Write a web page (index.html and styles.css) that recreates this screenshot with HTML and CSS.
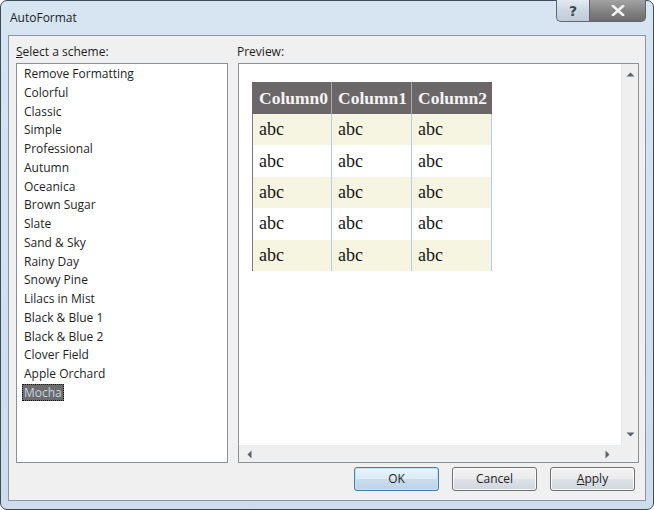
FILE: index.html
```html
<!DOCTYPE html>
<html>
<head>
<meta charset="utf-8">
<link rel="stylesheet" href="styles.css">
</head>
<body>
<div class="window">
  <div class="titlebar">
    <span class="title">AutoFormat</span>
    <div class="caption-btns">
      <div class="cbtn help">?</div>
      <div class="cbtn close">
        <svg width="14" height="11" viewBox="0 0 14 11"><path d="M2 1 L12 10 M12 1 L2 10" stroke="#f2f2f2" stroke-width="2.6" stroke-linecap="square"/></svg>
      </div>
    </div>
  </div>
  <div class="client">
    <div class="grid">
      <div class="lbl"><u>S</u>elect a scheme:</div>
      <div class="lbl">Preview:</div>
      <div class="listbox">
        <div class="item">Remove Formatting</div>
        <div class="item">Colorful</div>
        <div class="item">Classic</div>
        <div class="item">Simple</div>
        <div class="item">Professional</div>
        <div class="item">Autumn</div>
        <div class="item">Oceanica</div>
        <div class="item">Brown Sugar</div>
        <div class="item">Slate</div>
        <div class="item">Sand &amp; Sky</div>
        <div class="item">Rainy Day</div>
        <div class="item">Snowy Pine</div>
        <div class="item">Lilacs in Mist</div>
        <div class="item">Black &amp; Blue 1</div>
        <div class="item">Black &amp; Blue 2</div>
        <div class="item">Clover Field</div>
        <div class="item">Apple Orchard</div>
        <div class="item"><span class="sel">Mocha</span></div>
      </div>
      <div class="preview">
        <div class="pv-content">
          <table class="tbl">
            <tr class="hdr"><th>Column0</th><th>Column1</th><th>Column2</th></tr>
            <tr class="alt"><td>abc</td><td>abc</td><td>abc</td></tr>
            <tr><td>abc</td><td>abc</td><td>abc</td></tr>
            <tr class="alt"><td>abc</td><td>abc</td><td>abc</td></tr>
            <tr><td>abc</td><td>abc</td><td>abc</td></tr>
            <tr class="alt"><td>abc</td><td>abc</td><td>abc</td></tr>
          </table>
        </div>
        <div class="vscroll">
          <svg width="9" height="5" viewBox="0 0 9 5"><path d="M0.5 4.5 L4.5 0.5 L8.5 4.5 Z" fill="#5b6470"/></svg>
          <svg width="9" height="5" viewBox="0 0 9 5"><path d="M0.5 0.5 L4.5 4.5 L8.5 0.5 Z" fill="#5b6470"/></svg>
        </div>
        <div class="hscroll">
          <svg width="5" height="9" viewBox="0 0 5 9"><path d="M4.5 0.5 L0.5 4.5 L4.5 8.5 Z" fill="#5b6470"/></svg>
          <svg width="5" height="9" viewBox="0 0 5 9"><path d="M0.5 0.5 L4.5 4.5 L0.5 8.5 Z" fill="#5b6470"/></svg>
        </div>
        <div class="corner"></div>
      </div>
    </div>
    <div class="buttons">
      <div class="btn default">OK</div>
      <div class="btn">Cancel</div>
      <div class="btn"><u>A</u>pply</div>
    </div>
  </div>
</div>
</body>
</html>
```

FILE: styles.css
```css
html, body {
  margin: 0;
  padding: 0;
  background: #ffffff;
}
body {
  width: 654px;
  height: 510px;
  font-family: "Open Sans", "Noto Sans", sans-serif;
  font-size: 12px;
  color: #1e1e1e;
}
.window {
  box-sizing: border-box;
  width: 654px;
  height: 510px;
  border: 1px solid #3d4b5b;
  border-radius: 7px;
  background: linear-gradient(180deg, #d7e4f2 0%, #cedcec 100%);
  padding: 0 7px 8px 7px;
  display: flex;
  flex-direction: column;
}
.titlebar {
  height: 34px;
  display: flex;
  justify-content: space-between;
  align-items: flex-start;
}
.title {
  margin-left: 2px;
  margin-top: 8px;
  line-height: 17px;
  font-size: 12px;
  color: #1e1e1e;
}
.caption-btns {
  display: flex;
  margin-top: -1px;
}
.cbtn {
  box-sizing: border-box;
  height: 22px;
  display: flex;
  align-items: center;
  justify-content: center;
  border: 1px solid #5e6670;
  border-top: none;
}
.help {
  width: 33px;
  border-radius: 0 0 0 5px;
  border-right: none;
  background: linear-gradient(180deg, #e3eaf2 0%, #cdd7e2 50%, #c2ccd8 100%);
  color: #3c4450;
  font-family: "DejaVu Sans", sans-serif;
  font-weight: bold;
  font-size: 14px;
  line-height: 18px;
}
.close {
  width: 57px;
  border-radius: 0 0 5px 0;
  background: linear-gradient(180deg, #a3a3a3 0%, #858585 50%, #6b6b6b 100%);
}
.client {
  box-sizing: border-box;
  flex: 1;
  border: 1px solid #8996a6;
  background: #f0f0f0;
  padding: 8px 6px 9px 7px;
  display: flex;
  flex-direction: column;
}
.grid {
  display: grid;
  grid-template-columns: 212px 401px;
  grid-template-rows: 16px 400px;
  column-gap: 10px;
  row-gap: 3px;
}
.lbl {
  line-height: 16px;
  white-space: nowrap;
}
.grid .lbl:nth-child(2) {
  margin-left: -1px;
}
.listbox {
  box-sizing: border-box;
  border: 1px solid #8c9097;
  background: #ffffff;
  padding: 1px 0 0 5px;
}
.item {
  height: 18.75px;
  line-height: 18.75px;
  white-space: nowrap;
  padding-left: 2px;
}
.sel {
  display: inline-block;
  margin-left: -2px;
  padding: 0 1px;
  line-height: 15px;
  border: 1px dotted #111111;
  background: #6c6c6c;
  color: #c5d3e2;
}
.preview {
  box-sizing: border-box;
  border: 1px solid #8c9097;
  background: #ffffff;
  display: grid;
  grid-template-columns: 1fr 17px;
  grid-template-rows: 1fr 17px;
}
.pv-content {
  padding: 18px 0 0 13px;
  overflow: hidden;
}
.tbl {
  border-collapse: separate;
  border-spacing: 0;
  font-family: "Liberation Serif", "Times New Roman", serif;
}
.tbl th, .tbl td {
  box-sizing: border-box;
  width: 80px;
  text-align: left;
  padding: 0 0 0 6px;
  white-space: nowrap;
}
.tbl th {
  height: 32px;
  background: #6b6769;
  color: #f4f4f4;
  font-size: 17.5px;
  font-weight: bold;
  border-right: 1px solid #a7a9ad;
}
.tbl th:first-child {
  border-left: 1px solid #6b6769;
}
.tbl th:last-child {
  border-right: 1px solid #6b6769;
}
.tbl td {
  height: 31.4px;
  font-size: 18px;
  color: #151515;
  border-right: 1px solid #b5cbe6;
}
.tbl td:first-child {
  border-left: 1px solid #7a7a7a;
}
.tbl tr.alt td {
  background: #f5f5e2;
}
.vscroll {
  background: #efefef;
  border-left: 1px solid #e2e8ef;
  display: flex;
  flex-direction: column;
  justify-content: space-between;
  align-items: center;
  padding: 8px 0 8px 0;
}
.hscroll {
  background: #efefef;
  border-top: 1px solid #e8ecf0;
  display: flex;
  justify-content: space-between;
  align-items: center;
  padding: 0 11px 0 8px;
}
.corner {
  background: #efefef;
}
.buttons {
  margin-top: 4px;
  display: flex;
  justify-content: flex-end;
  gap: 13px;
  padding-right: 4px;
}
.btn {
  box-sizing: border-box;
  width: 85px;
  height: 24px;
  border: 1px solid #707070;
  border-radius: 3px;
  background: linear-gradient(180deg, #f3f3f3 0%, #ebebeb 48%, #dde2e8 52%, #cfd6de 100%);
  box-shadow: inset 0 0 0 1px #fbfbfb;
  display: flex;
  align-items: center;
  justify-content: center;
  line-height: 16px;
}
.btn.default {
  border-color: #3c7fb1;
  background: linear-gradient(180deg, #eaf4fb 0%, #dcebf6 48%, #c8dced 52%, #bed3e6 100%);
  box-shadow: inset 0 0 0 1px #c6e4f8;
}
```
